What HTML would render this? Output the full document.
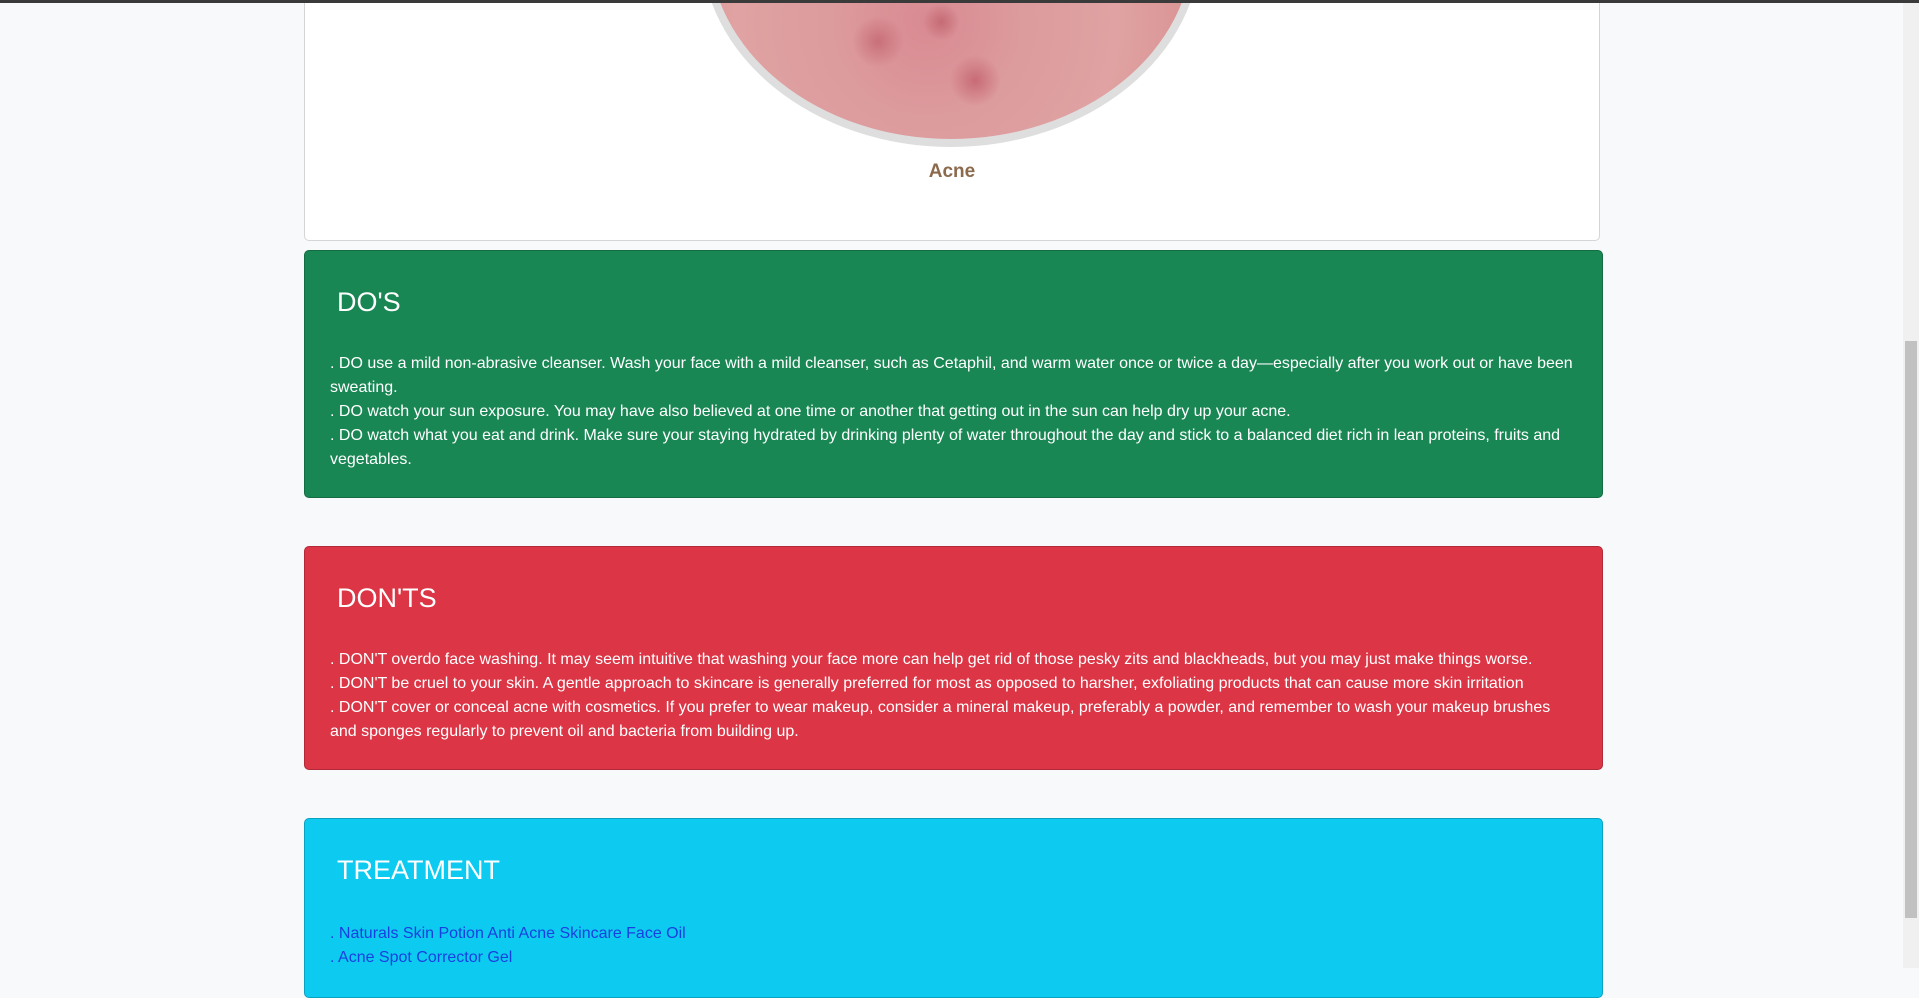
<!DOCTYPE html>
<html><head><meta charset="utf-8"><style>
html,body{margin:0;padding:0;}
body{width:1919px;height:968px;overflow:hidden;background:#f8f9fb;font-family:"Liberation Sans",Arial,sans-serif;position:relative;}
.topbar{position:absolute;left:0;top:0;width:1919px;height:3px;background:#3a3a3a;z-index:5}
.sb{position:absolute;right:0;top:3px;width:16px;height:965px;background:#f0f0f0}
.thumb{position:absolute;left:2px;top:338px;width:12px;height:577px;background:#c1c1c1}
.card{position:absolute;left:304px;top:-10px;width:1294px;height:249px;background:#fff;border:1px solid #d5d5d5;border-radius:5px;overflow:hidden}
.oval{position:absolute;left:396px;top:-250px;width:484px;height:390px;border:8px solid #dedede;border-radius:50%;
background:radial-gradient(circle at 35% 75%,#c97079 0,rgba(0,0,0,0) 6%),radial-gradient(circle at 48% 70%,#c56b75 0,rgba(0,0,0,0) 5%),radial-gradient(circle at 55% 85%,#c86b76 0,rgba(0,0,0,0) 6%),radial-gradient(circle at 45% 70%,#d98a92 0,#dc9b9d 25%,#e0a2a2 50%,#d89090 75%,#b5666a 95%);}
.acne{position:absolute;left:0;width:100%;top:170px;text-align:center;color:#8c6a4d;font-weight:bold;font-size:19px}
.box{position:absolute;left:304px;width:1299px;border-radius:5px;color:#fff;box-sizing:border-box;}
.box h2{margin:0;font-weight:normal;font-size:27px;position:absolute;left:32px}
.box p{margin:0;position:absolute;left:25px;right:14px;font-size:16px;line-height:24px}
.g{top:250px;height:248px;background:#198754;border:1px solid #146c43}
.r{top:546px;height:224px;background:#dc3545;border:1px solid #b02a37}
.c{top:818px;height:180px;background:#0dcaf0;border:1px solid #0aa2c0}
.c p{color:#1a3fe0}
a{color:#1a3fe0;text-decoration:none}
</style></head><body>
<div class="topbar"></div>
<div class="card"><div class="oval"></div><div class="acne">Acne</div></div>
<div class="box g"><h2 style="top:36px">DO'S</h2><p style="top:101px">. DO use a mild non-abrasive cleanser. Wash your face with a mild cleanser, such as Cetaphil, and warm water once or twice a day—especially after you work out or have been<br>sweating.<br>. DO watch your sun exposure. You may have also believed at one time or another that getting out in the sun can help dry up your acne.<br>. DO watch what you eat and drink. Make sure your staying hydrated by drinking plenty of water throughout the day and stick to a balanced diet rich in lean proteins, fruits and<br>vegetables.</p></div>
<div class="box r"><h2 style="top:36px">DON'TS</h2><p style="top:101px">. DON'T overdo face washing. It may seem intuitive that washing your face more can help get rid of those pesky zits and blackheads, but you may just make things worse.<br>. DON'T be cruel to your skin. A gentle approach to skincare is generally preferred for most as opposed to harsher, exfoliating products that can cause more skin irritation<br>. DON'T cover or conceal acne with cosmetics. If you prefer to wear makeup, consider a mineral makeup, preferably a powder, and remember to wash your makeup brushes<br>and sponges regularly to prevent oil and bacteria from building up.</p></div>
<div class="box c"><h2 style="top:36px">TREATMENT</h2><p style="top:103px">. <a>Naturals Skin Potion Anti Acne Skincare Face Oil</a><br>. <a>Acne Spot Corrector Gel</a></p></div>
<div class="sb"><div class="thumb"></div></div>
</body></html>
